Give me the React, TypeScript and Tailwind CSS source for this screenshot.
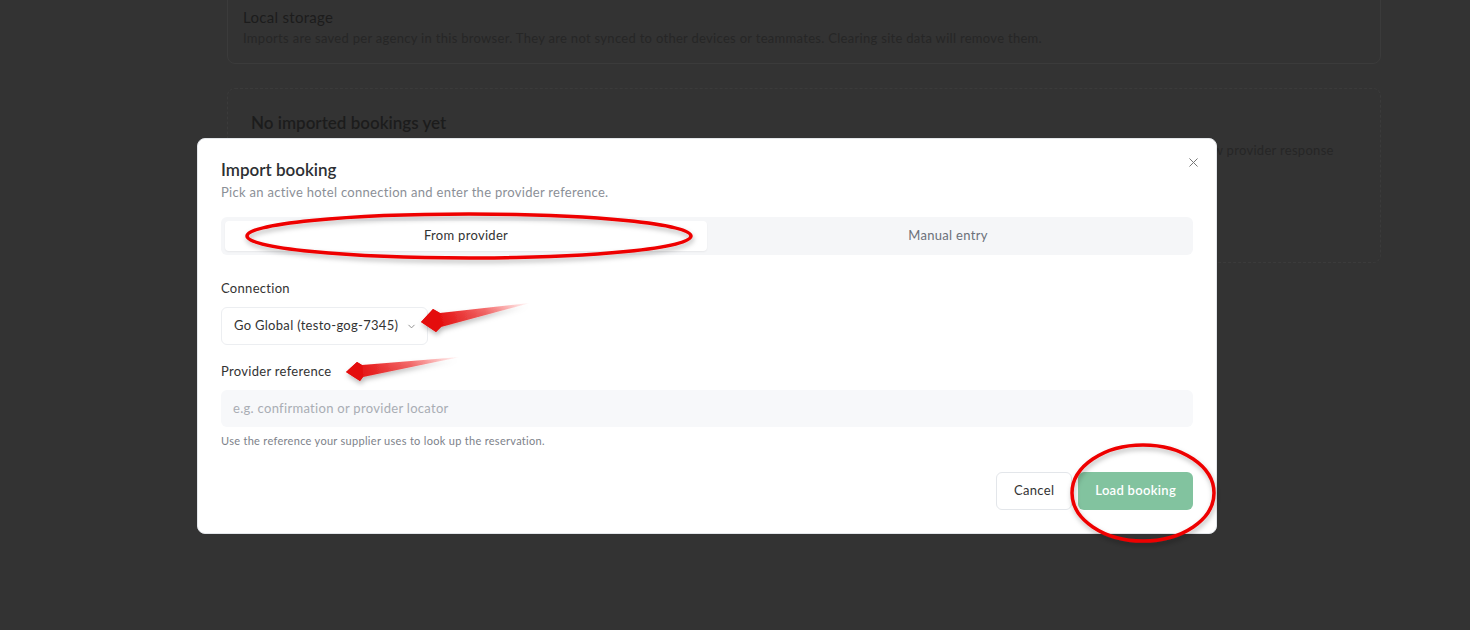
import React from 'react';
import { X, ChevronDown } from 'lucide-react';

const font = { fontFamily: 'Lato, "Open Sans", sans-serif' };

// red marker drawings laid over the screenshot
const Annotations: React.FC = () => (
    <svg className="absolute inset-0 pointer-events-none" width="1470" height="630" viewBox="0 0 1470 630">
        <defs>
            <filter id="shade" x="-20%" y="-50%" width="140%" height="200%">
                <feDropShadow dx="1" dy="3" stdDeviation="2.5" floodColor="#000" floodOpacity="0.28" />
            </filter>
            <linearGradient id="a1" gradientUnits="userSpaceOnUse" x1="530" y1="303" x2="440" y2="320">
                <stop offset="0" stopColor="#ff3b3b" stopOpacity="0" />
                <stop offset="0.5" stopColor="#f03030" stopOpacity="0.7" />
                <stop offset="1" stopColor="#e41010" />
            </linearGradient>
            <linearGradient id="a2" gradientUnits="userSpaceOnUse" x1="460" y1="357" x2="360" y2="371">
                <stop offset="0" stopColor="#ff3b3b" stopOpacity="0" />
                <stop offset="0.5" stopColor="#f03030" stopOpacity="0.7" />
                <stop offset="1" stopColor="#e41010" />
            </linearGradient>
        </defs>
        <ellipse cx="469" cy="236" rx="222" ry="22" fill="none" stroke="#ee0000" strokeWidth="3.5" filter="url(#shade)" />
        <ellipse cx="1143" cy="493" rx="71" ry="48" fill="none" stroke="#ee0000" strokeWidth="3.5" filter="url(#shade)" />
        <g filter="url(#shade)">
            <polygon points="421,322 433,309 440,313 530,303 441,327 436,332" fill="url(#a1)" />
            <polygon points="421,322 433,309 440,313 441,327 436,332" fill="#e41010" />
            <polygon points="346,372 357,362 362,365 460,357 363,377 360,381" fill="url(#a2)" />
            <polygon points="346,372 357,362 362,365 363,377 360,381" fill="#e41010" />
        </g>
    </svg>
);

const ImportModal: React.FC = () => (
    <div className="absolute left-[197px] top-[138px] w-[1020px] bg-white rounded-lg border border-[#e3e6ea] px-[23px] pt-[19px] pb-[23px] tracking-[0.3px]">
        <button className="absolute right-[15px] top-[16px] text-[#777]">
            <X size={15} strokeWidth={1.6} />
        </button>
        <h2 className="text-[17px] leading-6 font-semibold tracking-normal text-[#2d2f33]">Import booking</h2>
        <p className="text-[13px] leading-5 text-[#8b8f97]">Pick an active hotel connection and enter the provider reference.</p>

        <div className="mt-[15px] h-[38px] p-1 bg-[#f5f6f8] rounded-md flex">
            <div className="flex-1 bg-white rounded shadow-[0_1px_2px_rgba(0,0,0,0.06)] flex items-center justify-center text-[13px] text-[#333]">
                From provider
            </div>
            <div className="flex-1 flex items-center justify-center text-[13px] text-[#6b7079]">Manual entry</div>
        </div>

        <div className="mt-[23px] text-[13px] leading-5 text-[#333]">Connection</div>
        <div className="mt-[9px] h-[38px] w-fit border border-[#eceef1] rounded-md flex items-center pl-3 pr-[10px] gap-2 text-[13px] text-[#333] whitespace-nowrap">
            <span>Go Global (testo-gog-7345)</span>
            <ChevronDown size={11} className="text-[#888]" />
        </div>

        <div className="mt-4 text-[13px] leading-5 text-[#333]">Provider reference</div>
        <div className="mt-[9px] h-[37px] bg-[#f7f8fa] rounded-md flex items-center px-3 text-[13px] text-[#a9adb4]">
            e.g. confirmation or provider locator
        </div>
        <p className="mt-[6px] text-[11px] leading-4 text-[#7d828a]">Use the reference your supplier uses to look up the reservation.</p>

        <div className="mt-[23px] flex justify-end gap-[6px]">
            <button className="h-[38px] px-[17px] border border-[#e3e6ea] rounded-md text-[13px] text-[#333] bg-white">Cancel</button>
            <button className="h-[38px] px-[17px] rounded-md text-[13px] font-semibold text-white bg-[#82c39f]">Load booking</button>
        </div>
    </div>
);

export default function App() {
    return (
        <div className="relative w-[1470px] h-[630px] overflow-hidden bg-[#333333] tracking-[0.3px]" style={font}>
            <div className="ml-[227px] w-[1154px] flex flex-col gap-6">
                <div className="-mt-[11px] rounded-lg border border-[#3b3b3b] px-[15px] pt-4 pb-[15px]">
                    <div className="text-[15px] leading-[22px] text-[#1c1c1c]">Local storage</div>
                    <p className="text-[13px] leading-5 text-[#262626]">
                        Imports are saved per agency in this browser. They are not synced to other devices or teammates. Clearing site data will remove them.
                    </p>
                </div>
                <div className="h-[175px] rounded-lg border border-dashed border-[#3b3b3b] px-[23px] pt-[22px]">
                    <div className="text-[17px] leading-6 font-semibold tracking-normal text-[#1c1c1c]">No imported bookings yet</div>
                    <p className="mt-[5px] text-[13px] leading-5 text-[#262626] whitespace-nowrap">
                        Use “Import booking” to load a reservation from a connected supplier. Imported bookings are stored locally so you can reopen the saved details and review the raw provider response
                    </p>
                </div>
            </div>
            <ImportModal />
            <Annotations />
        </div>
    );
}
